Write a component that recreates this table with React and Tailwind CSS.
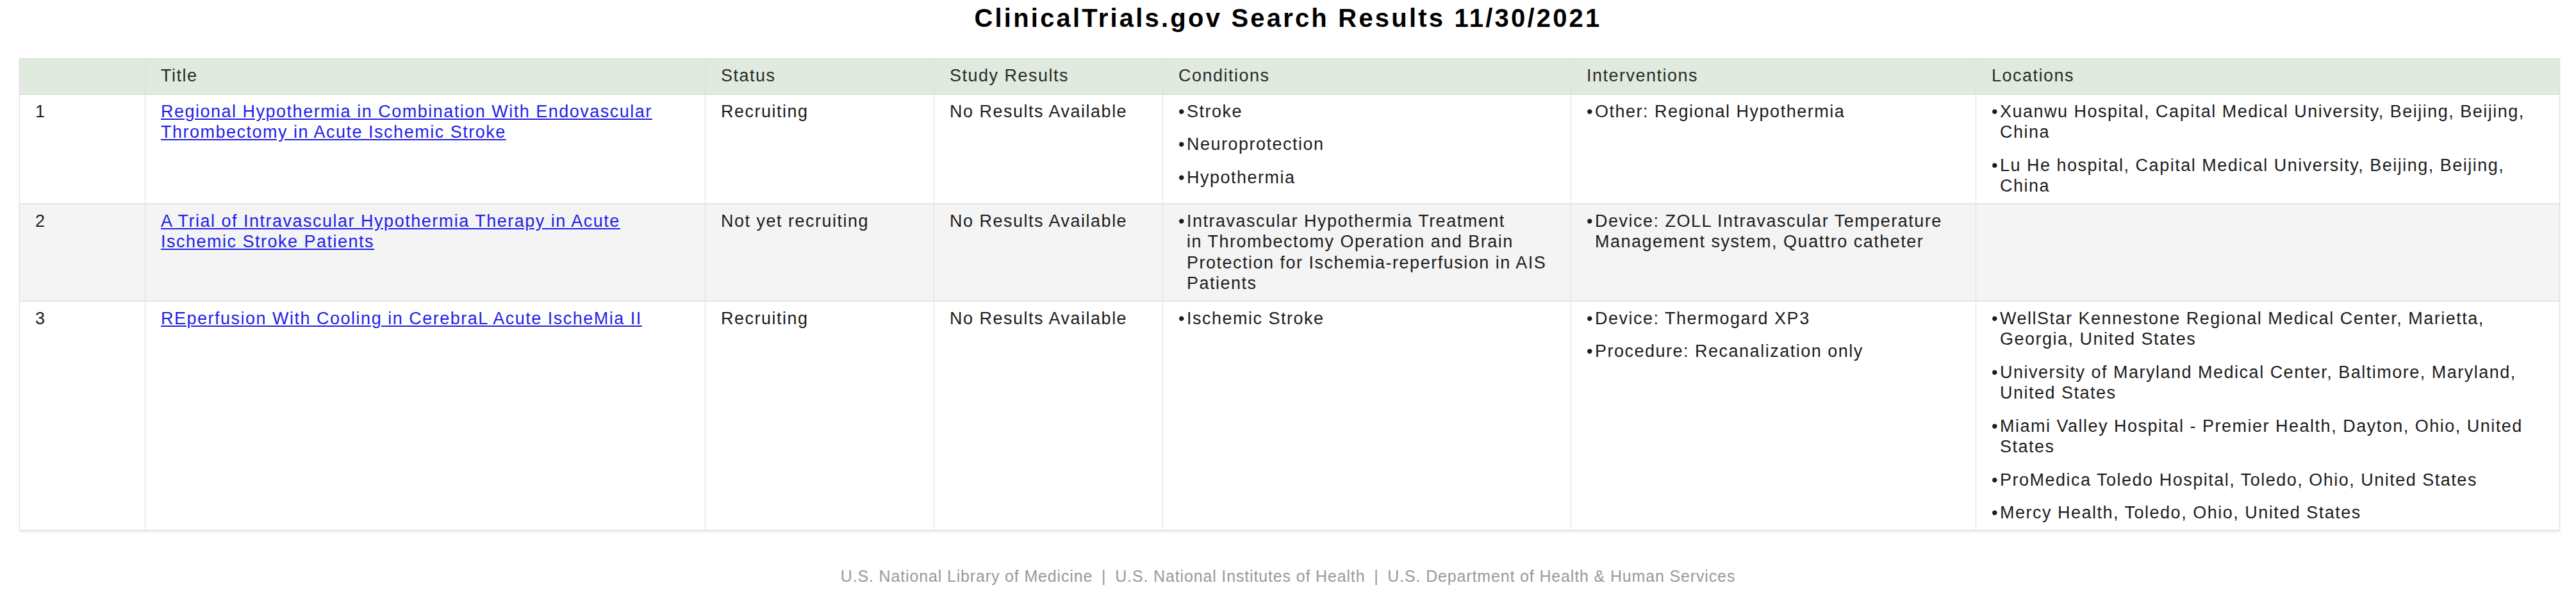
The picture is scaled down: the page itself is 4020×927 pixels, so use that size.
const rows = [
  {
    id: 1,
    title: ["Regional Hypothermia in Combination With Endovascular", "Thrombectomy in Acute Ischemic Stroke"],
    status: "Recruiting",
    results: "No Results Available",
    conditions: [["Stroke"], ["Neuroprotection"], ["Hypothermia"]],
    interventions: [["Other: Regional Hypothermia"]],
    locations: [
      ["Xuanwu Hospital, Capital Medical University, Beijing, Beijing,", "China"],
      ["Lu He hospital, Capital Medical University, Beijing, Beijing,", "China"],
    ],
  },
  {
    id: 2,
    title: ["A Trial of Intravascular Hypothermia Therapy in Acute", "Ischemic Stroke Patients"],
    status: "Not yet recruiting",
    results: "No Results Available",
    conditions: [
      [
        "Intravascular Hypothermia Treatment",
        "in Thrombectomy Operation and Brain",
        "Protection for Ischemia-reperfusion in AIS",
        "Patients",
      ],
    ],
    interventions: [["Device: ZOLL Intravascular Temperature", "Management system, Quattro catheter"]],
    locations: [],
  },
  {
    id: 3,
    title: ["REperfusion With Cooling in CerebraL Acute IscheMia II"],
    status: "Recruiting",
    results: "No Results Available",
    conditions: [["Ischemic Stroke"]],
    interventions: [["Device: Thermogard XP3"], ["Procedure: Recanalization only"]],
    locations: [
      ["WellStar Kennestone Regional Medical Center, Marietta,", "Georgia, United States"],
      ["University of Maryland Medical Center, Baltimore, Maryland,", "United States"],
      ["Miami Valley Hospital - Premier Health, Dayton, Ohio, United", "States"],
      ["ProMedica Toledo Hospital, Toledo, Ohio, United States"],
      ["Mercy Health, Toledo, Ohio, United States"],
    ],
  },
];

function Lines({ lines }) {
  return lines.map((line, i) => (
    <span key={i}>
      {line}
      {i < lines.length - 1 && <br />}
    </span>
  ));
}

function BulletList({ items }) {
  return (
    <div className="flex flex-col gap-[19px]">
      {items.map((item, i) => (
        <div key={i} className="flex">
          <span className="w-[13px] shrink-0 tracking-normal">•</span>
          <span>
            <Lines lines={item} />
          </span>
        </div>
      ))}
    </div>
  );
}

const cell = "align-top pl-[24px] pr-[16px] pt-[10px] pb-[10px] border-x border-[#dedede]";

export default function App() {
  return (
    <div className="w-full min-h-[927px] bg-white text-[#1c1c1c] font-['Liberation_Sans',Arial,sans-serif]">
      {/* Heading */}
      <div className="h-[91px] pt-[4px] text-center">
        <h1 className="text-[40px] leading-[48px] font-bold tracking-[3.2px] text-black">
          ClinicalTrials.gov Search Results 11/30/2021
        </h1>
      </div>

      {/* Results table */}
      <div className="px-[30px]">
        <table className="w-full table-fixed border border-[#d6d6d6] text-[27px] leading-[32.5px] tracking-[1.5px] shadow-[0_2px_4px_rgba(0,0,0,0.06)]">
          <thead>
            <tr className="bg-[#e0eadf] text-left text-[#2a2a2a] border-b border-[#d6d6d6]">
              <th className={`${cell} w-[196px] font-normal pb-[12px]`}></th>
              <th className={`${cell} w-[874px] font-normal pb-[12px]`}>Title</th>
              <th className={`${cell} w-[357px] font-normal pb-[12px]`}>Status</th>
              <th className={`${cell} w-[357px] font-normal pb-[12px]`}>Study Results</th>
              <th className={`${cell} w-[637px] font-normal pb-[12px]`}>Conditions</th>
              <th className={`${cell} w-[632px] font-normal pb-[12px]`}>Interventions</th>
              <th className={`${cell} w-[911px] font-normal pb-[12px]`}>Locations</th>
            </tr>
          </thead>
          <tbody>
            {rows.map((r) => (
              <tr
                key={r.id}
                className={`border-b-2 border-[#e4e4e4] ${r.id % 2 === 0 ? "bg-[#f4f4f4]" : "bg-white"}`}
              >
                <td className={cell}>{r.id}</td>
                <td className={cell}>
                  <a href="#" className="text-[#1f1fe6] underline">
                    <Lines lines={r.title} />
                  </a>
                </td>
                <td className={cell}>{r.status}</td>
                <td className={cell}>{r.results}</td>
                <td className={cell}>
                  <BulletList items={r.conditions} />
                </td>
                <td className={cell}>
                  <BulletList items={r.interventions} />
                </td>
                <td className={cell}>
                  <BulletList items={r.locations} />
                </td>
              </tr>
            ))}
          </tbody>
        </table>
      </div>

      {/* Footer */}
      <div className="mt-[54px] text-center text-[25px] leading-[32px] tracking-[0.85px] text-[#999]">
        U.S. National Library of Medicine <span className="mx-[6px]">|</span> U.S. National Institutes of Health{" "}
        <span className="mx-[6px]">|</span> U.S. Department of Health &amp; Human Services
      </div>
    </div>
  );
}
